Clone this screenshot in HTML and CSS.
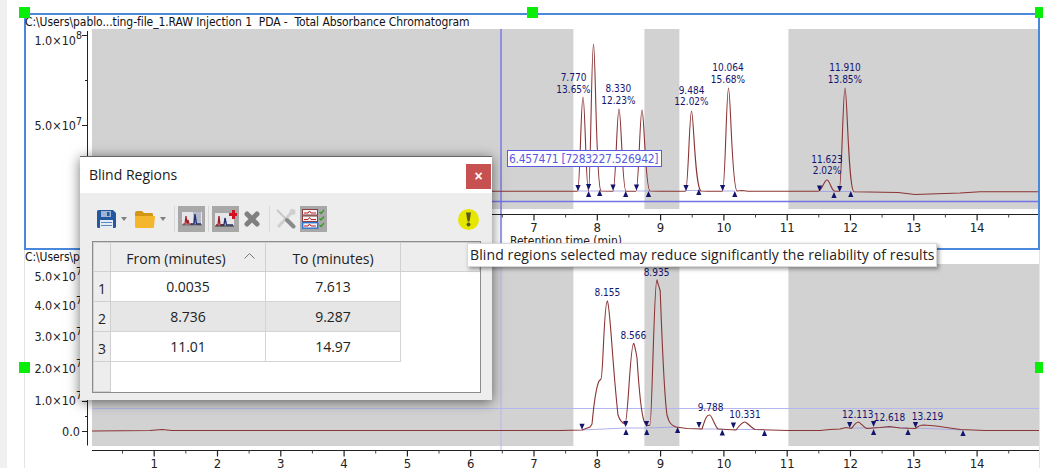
FILE: index.html
```html
<!DOCTYPE html>
<html lang="en">
<head>
<meta charset="utf-8">
<title>Blind Regions</title>
<link rel="stylesheet" href="styles.css">
</head>
<body>
<div class="app">
  <svg class="defs" width="0" height="0" aria-hidden="true">
    <defs>
      <path id="dn" d="M-2.6 -3H2.6L0 3Z"/>
      <path id="up" d="M-2.6 3H2.6L0 -3Z"/>
    </defs>
  </svg>

  <section class="panel panel-top">
    <div class="chart-title">C:\Users\pablo...ting-file_1.RAW Injection 1  PDA -  Total Absorbance Chromatogram</div>
    <svg class="plot plot-top" viewBox="26 29 1012 218" width="1012" height="218">
      <rect class="blind" x="92" y="29" width="947" height="180"/>
      <rect class="clear" x="573.4" y="29" width="71" height="180"/>
      <rect class="clear" x="679.4" y="29" width="109" height="180"/>
      <path class="axis" d="M87.5 31V248M82 35.5H87.5M85 80.5H87.5M82 125.5H87.5M85 170.5H87.5"/>
      <text class="ylab" x="76" y="45" text-anchor="end">1.0×10</text><text class="ysup" x="76" y="39">8</text>
      <text class="ylab" x="76" y="130" text-anchor="end">5.0×10</text><text class="ysup" x="76" y="125">7</text>
      <line class="cursor" x1="501" y1="29" x2="501" y2="248"/>
      <line class="cursor" x1="92" y1="201.5" x2="1039" y2="201.5"/>
      <path class="base" d="M578 191H589M589 191H600M613 191H626M637 191H649M686 190.500H699M723 191H735M820 191.500H834M840 191.500H851"/>
      <path class="signal" d="M92 191.200H577.500C580 191.200 581 97 583 97C585 97 586 191 588.500 191C590.500 191 591.500 44 593.500 44C595.500 44 596 188 601 191L613 191.200C615.700 191.200 616.900 109 619 109C621.100 109 622.300 191 626 191.200H636C638.700 191.200 639.900 110 642 110C644.100 110 645.300 190 650 191L660 191.200H685.500C688.200 191.200 689.400 111 691.500 111C693.600 111 694.800 188 701 191L708 191.200H722.500C725.200 191.200 726.400 88 728.500 88C730.600 88 731.800 189 737 191L742 190.500L748 191.200H818C822 191.200 824 180 827 180C830 180 831 191 835 191.200H839C841.700 191.200 842.900 88 845 88C847.100 88 848.300 190 854 191.800L898 192.500L915 194.500L960 193L980 191.800H1039"/>
      <g class="marks">
        <use href="#dn" x="578" y="188"/><use href="#dn" x="588.600" y="187"/><use href="#dn" x="613" y="187.500"/><use href="#dn" x="636.500" y="187.500"/><use href="#dn" x="686" y="188"/><use href="#dn" x="722.600" y="188"/><use href="#dn" x="819.600" y="188.600"/><use href="#dn" x="839.700" y="189"/>
        <use href="#up" x="588.600" y="194"/><use href="#up" x="599.700" y="193"/><use href="#up" x="625.700" y="194"/><use href="#up" x="648.500" y="194"/><use href="#up" x="698.800" y="192"/><use href="#up" x="734.800" y="194"/><use href="#up" x="834" y="195"/><use href="#up" x="850.800" y="194"/>
      </g>
      <g class="peak" text-anchor="middle">
        <text x="573.500" y="80.500">7.770</text><text x="573.500" y="92.500">13.65%</text>
        <text x="618.400" y="92">8.330</text><text x="618.400" y="103.500">12.23%</text>
        <text x="691.500" y="94">9.484</text><text x="691.500" y="105">12.02%</text>
        <text x="728" y="71">10.064</text><text x="728" y="83">15.68%</text>
        <text x="845" y="71">11.910</text><text x="845" y="83">13.85%</text>
        <text x="827" y="163">11.623</text><text x="827" y="174">2.02%</text>
      </g>
      <path class="axis" d="M92 214.500H1039"/>
      <line class="tick-major" x1="153.600" y1="217.500" x2="1039" y2="217.500"/>
      <line class="tick-minor" x1="122" y1="216" x2="1039" y2="216"/>
      <g class="xlab" text-anchor="middle">
        <text x="534" y="232">7</text><text x="597.300" y="232">8</text><text x="660.600" y="232">9</text><text x="723.900" y="232">10</text><text x="787.200" y="232">11</text><text x="850.500" y="232">12</text><text x="913.800" y="232">13</text><text x="977.100" y="232">14</text>
      </g>
      <text class="xtitle" x="510" y="245">Retention time (min)</text>
      <g class="tag">
        <rect x="507.500" y="150.500" width="154" height="16"/>
        <text x="509" y="163">6.457471 [7283227.526942]</text>
      </g>
    </svg>
  </section>

  <section class="panel panel-bottom">
    <div class="chart-title">C:\Users\pablo...ting-file_1.RAW Injection 1</div>
    <svg class="plot plot-bottom" viewBox="25 264 1015 204" width="1015" height="204">
      <rect class="blind" x="92" y="264" width="947" height="182"/>
      <rect class="clear" x="573.400" y="264" width="71" height="182"/>
      <rect class="clear" x="679.400" y="264" width="109" height="182"/>
      <path class="axis" d="M87.500 266V445.500M82 431.500H87.500M85 416.500H87.500M82 401.500H87.500"/>
      <text class="ylab" x="76" y="281" text-anchor="end">5.0×10</text><text class="ysup" x="76" y="275">7</text>
      <text class="ylab" x="76" y="310" text-anchor="end">4.0×10</text><text class="ysup" x="76" y="304">7</text>
      <text class="ylab" x="76" y="341" text-anchor="end">3.0×10</text><text class="ysup" x="76" y="335">7</text>
      <text class="ylab" x="76" y="373" text-anchor="end">2.0×10</text><text class="ysup" x="76" y="367">7</text>
      <text class="ylab" x="76" y="405" text-anchor="end">1.0×10</text><text class="ysup" x="76" y="399">7</text>
      <text class="ylab" x="80" y="436" text-anchor="end">0.0</text>
      <line class="cursor-faint" x1="501" y1="264" x2="501" y2="450"/>
      <line class="cursor-faint" x1="92" y1="408.500" x2="1039" y2="408.500"/>
      <path class="base" d="M582 430L625 428H646L677 427M699 429H722M733 429.500H764M850 428H873M873 427.500H908M916 428L963 430"/>
      <path class="signal" d="M92 431L150 430.500L162 429.500L172 430.500H560L582 430L590 427L592 424C594 405 595 390 599 381L601 379C603 378 604 302 607.300 301C610 303 612 360 618 415C620 421 622 423 625 424C628 424 630 344 633.700 343.300C635 346 636 352 637 358C639 390 641 412 644 421C646 426 648 426 650 425C652 425 654 281 656.900 280C658 284 659 286 660.200 291C662 340 664 395 667 415C669 423 671 425 676 427L687 428.500L702 429C705 420 706 415 709.500 415C712 415 714 425 718 429L736 430C739 426 742 422 744.800 422C747 422 750 427 755 429.500L788 430.500H820L830 429.500L840 429L846 427.500L851.500 428.500C854 425 856 422 858.400 422C861 423 863 427 867 428.500L880 427.500L889.500 426.500L900 428L915.500 428.500C918 426 920 425 924 425L936 426L960.500 429.500L985 430.500H1039"/>
      <g class="marks">
        <use href="#dn" x="582" y="426.700"/><use href="#dn" x="625.700" y="424"/><use href="#dn" x="646.500" y="424"/><use href="#dn" x="699" y="425"/><use href="#dn" x="733.400" y="425.500"/><use href="#dn" x="849.700" y="425"/><use href="#dn" x="873.600" y="424"/><use href="#dn" x="915.500" y="425"/>
        <use href="#up" x="626" y="432"/><use href="#up" x="646.800" y="432"/><use href="#up" x="677.600" y="430"/><use href="#up" x="722.300" y="432.500"/><use href="#up" x="764.500" y="433"/><use href="#up" x="873.600" y="432"/><use href="#up" x="908" y="432"/><use href="#up" x="963" y="433"/>
      </g>
      <g class="peak" text-anchor="middle">
        <text x="607.300" y="295.500">8.155</text>
        <text x="633.400" y="339">8.566</text>
        <text x="656.500" y="275.500">8.935</text>
        <text x="710.500" y="410.500">9.788</text>
        <text x="745" y="418">10.331</text>
        <text x="857.700" y="418">12.113</text>
        <text x="889.500" y="420.500">12.618</text>
        <text x="927.500" y="419.500">13.219</text>
      </g>
      <path class="axis" d="M92 450.500H1039"/>
      <line class="tick-major" x1="153.600" y1="453.500" x2="1039" y2="453.500"/>
      <line class="tick-minor" x1="122" y1="452" x2="1039" y2="452"/>
      <g class="xlab" text-anchor="middle">
        <text x="154.200" y="468">1</text><text x="217.500" y="468">2</text><text x="280.800" y="468">3</text><text x="344.100" y="468">4</text><text x="407.400" y="468">5</text><text x="470.700" y="468">6</text><text x="534" y="468">7</text><text x="597.300" y="468">8</text><text x="660.600" y="468">9</text><text x="723.900" y="468">10</text><text x="787.200" y="468">11</text><text x="850.500" y="468">12</text><text x="913.800" y="468">13</text><text x="977.100" y="468">14</text>
      </g>
    </svg>
  </section>

  <span class="handle h-tl"></span>
  <span class="handle h-tm"></span>
  <span class="handle h-tr"></span>
  <span class="handle h-ml"></span>
  <span class="handle h-mr"></span>

  <div class="dialog">
    <header class="dialog-head">
      <span class="dialog-title">Blind Regions</span>
      <button class="close" type="button">×</button>
    </header>
    <div class="dialog-body">
      <div class="toolbar">
        <svg class="ico ico-save" viewBox="0 0 19 18" width="19" height="18">
          <path fill="#24589f" d="M0 1.500Q0 0 1.500 0H16L19 3V16.500Q19 18 17.500 18H1.500Q0 18 0 16.500Z"/>
          <rect fill="#e4ecf6" x="3" y="10" width="13" height="8"/>
          <path stroke="#5f86bd" d="M4 12.500H15M4 15.500H15"/>
          <rect fill="#9db4d2" x="4" y="1" width="10" height="6"/>
          <rect fill="#24589f" x="10" y="2" width="2.500" height="4"/>
        </svg>
        <span class="caret"></span>
        <svg class="ico ico-open" viewBox="0 0 20 17" width="20" height="17">
          <path fill="#d39516" d="M0 2Q0 0 2 0H7L9 2H17Q18 2 18 4V6H0Z"/>
          <path fill="#f3b62c" d="M0 5H20L19 15.500Q19 17 17.500 17H1.500Q0 17 0 15.500Z"/>
        </svg>
        <span class="caret"></span>
        <span class="sep"></span>
        <span class="tool on">
          <svg viewBox="0 0 20 16" width="20" height="16">
            <rect fill="#e6e6ea" x="0" y="1" width="20" height="14"/>
            <rect fill="#b6b8cc" x="11" y="1" width="8" height="13"/>
            <path fill="none" stroke="#a01c24" stroke-width="1.200" d="M1 13H3L4 5L5 13L6 9L7 13H10"/>
            <path fill="none" stroke="#26336e" stroke-width="1.400" d="M9 13H12L13 3L14.500 13H19"/>
            <path stroke="#333" d="M0 14H20"/>
          </svg>
        </span>
        <span class="sep"></span>
        <span class="tool on">
          <svg viewBox="0 0 22 18" width="22" height="18">
            <rect fill="#e6e6ea" x="0" y="3" width="19" height="13"/>
            <path fill="none" stroke="#a01c24" stroke-width="1.300" d="M1 15H3L4 6L5 15H9"/>
            <path fill="none" stroke="#26336e" stroke-width="1.400" d="M6 15H9L10 8L11.500 15H18"/>
            <path stroke="#333" d="M0 16H19"/>
            <path fill="#d3101f" d="M14 3H17V0H20V3H22V6H20V9H17V6H14Z"/>
          </svg>
        </span>
        <svg class="ico ico-del" viewBox="0 0 16 16" width="16" height="16">
          <path fill="none" stroke="#808080" stroke-width="5" stroke-linecap="round" d="M3 3L13 13M13 3L3 13"/>
        </svg>
        <span class="sep sep-wide"></span>
        <svg class="ico ico-tools" viewBox="0 0 20 20" width="20" height="20">
          <path fill="none" stroke="#cfcfcf" stroke-width="3" d="M17 2L2 18"/>
          <circle fill="#cfcfcf" cx="16.500" cy="3" r="3"/>
          <path fill="none" stroke="#c8c8c8" stroke-width="2" d="M1 1L11 11"/>
          <path fill="none" stroke="#8a8a8a" stroke-width="4" stroke-linecap="round" d="M11 11L17.500 17.500"/>
        </svg>
        <span class="tool on tool-last">
          <svg viewBox="0 0 23 20" width="23" height="20">
            <rect fill="#f4f4f4" stroke="#8a4040" x="0.500" y="0.500" width="15" height="5.500"/>
            <rect fill="#f4f4f4" stroke="#8a4040" x="0.500" y="7" width="15" height="5.500"/>
            <rect fill="#f4f4f4" stroke="#2f74d0" stroke-width="1.400" x="0.700" y="13.700" width="15" height="5.500"/>
            <path fill="none" stroke="#c02020" d="M2 4H6L7.500 2L9 4H14M2 10.500H6L7.500 8.500L9 10.500H14M2 17H6L7.500 15L9 17H14"/>
            <path fill="none" stroke="#3c9a2a" stroke-width="1.400" d="M17.500 3L19 4.500L22 1M17.500 9.500L19 11L22 7.500M17.500 16L19 17.500L22 14"/>
          </svg>
        </span>
        <svg class="warn" viewBox="0 0 21 21" width="21" height="21">
          <circle fill="#e6e600" cx="10.500" cy="10.500" r="10.500"/>
          <path fill="#5a5a20" d="M8 3.500H13L11.500 12.500H9.500Z"/>
          <circle fill="#5a5a20" cx="10.500" cy="15.500" r="2"/>
        </svg>
      </div>
      <div class="table-wrap">
        <table class="regions">
          <colgroup><col class="c0"><col class="c1"><col class="c2"><col></colgroup>
          <thead>
            <tr>
              <th></th>
              <th class="from">From (minutes)
                <svg class="sort" viewBox="0 0 11 6" width="11" height="6"><path fill="none" stroke="#777" d="M0.500 5.500L5.500 0.500L10.500 5.500"/></svg>
              </th>
              <th>To (minutes)</th>
              <th class="filler"></th>
            </tr>
          </thead>
          <tbody>
            <tr><th>1</th><td>0.0035</td><td>7.613</td><td class="empty"></td></tr>
            <tr class="alt"><th>2</th><td>8.736</td><td>9.287</td><td class="empty"></td></tr>
            <tr><th>3</th><td>11.01</td><td>14.97</td><td class="empty"></td></tr>
            <tr class="rest"><th></th><td class="empty" colspan="3"></td></tr>
          </tbody>
        </table>
      </div>
    </div>
  </div>

  <div class="tooltip">Blind regions selected may reduce significantly the reliability of results</div>
</div>
</body>
</html>
```
FILE: styles.css
```css
* { box-sizing: border-box; }
html, body { margin: 0; padding: 0; background: #fff; }
.app {
  position: relative;
  width: 1043px;
  height: 468px;
  overflow: hidden;
  padding-top: 13px;
  display: flex;
  flex-direction: column;
  background: #fff;
  border-left: 7px solid #f0f0f0;
  font-family: "Open Sans", "Liberation Sans", sans-serif;
}
.defs { position: absolute; }
.panel { margin-left: 17px; width: 1016px; background: #fff; }
.panel-top { height: 237px; border: 2px solid #4a88dc; flex: none; }
.panel-bottom { height: 218px; flex: none; border-left: 1px solid #e4e4e4; border-right: 1px solid #e4e4e4; }
.chart-title {
  height: 14px;
  margin-left: -1px;
  white-space: pre;
  letter-spacing: -.07px;
  font: 12px/14px "DejaVu Sans Condensed", "Liberation Sans", sans-serif;
  color: #111;
}
.panel-bottom .chart-title { margin-left: 0; }
.plot { display: block; overflow: hidden; }
.blind { fill: #d2d2d2; }
.clear { fill: #fff; }
.axis { fill: none; stroke: #222; stroke-width: 1; }
.signal { fill: none; stroke: #8a3434; stroke-width: 1.1; }
.base { fill: none; stroke: #9c9ce4; stroke-width: .8; }
.cursor { stroke: #7474e6; stroke-width: 1.4; }
.cursor-faint { stroke: #b6b6ee; stroke-width: 1; }
.marks { fill: #14146e; }
.peak text { font: 10px "DejaVu Sans Condensed", sans-serif; fill: #14146e; }
.ylab, .xlab text, .xtitle { font: 12.500px "DejaVu Sans Condensed", sans-serif; fill: #222; }
.xtitle { font-size: 12px; }
.xlab text { font-size: 13px; }
.ysup { font: 10.500px "DejaVu Sans Condensed", sans-serif; fill: #222; }
.tick-major { stroke: #222; stroke-width: 6; stroke-dasharray: 1.2 62.1; }
.tick-minor { stroke: #444; stroke-width: 3; stroke-dasharray: 1 62.3; }
.tag rect { fill: #fff; stroke: #5a5ae0; stroke-width: 1; }
.tag text { font: 12px "DejaVu Sans Condensed", sans-serif; letter-spacing: -.27px; fill: #5a5ae0; }

.handle { position: absolute; width: 11px; height: 11px; background: #08ee08; }
.h-tl { left: 12px; top: 7px; }
.h-tm { left: 520px; top: 7px; }
.h-tr { left: 1028px; top: 7px; }
.h-ml { left: 12px; top: 362px; }
.h-mr { left: 1028px; top: 362px; }

.dialog {
  position: absolute;
  left: 73px;
  top: 156px;
  width: 412px;
  height: 244px;
  display: flex;
  flex-direction: column;
  background: #ededed;
  border-top: 1px solid #666;
  box-shadow: 0 2px 12px rgba(0, 0, 0, .55);
}
.dialog-head {
  height: 36px;
  flex: none;
  display: flex;
  align-items: flex-start;
  justify-content: space-between;
  background: #fff;
  padding: 7px 1px 0 9px;
}
.dialog-title { font-size: 14px; line-height: 21px; color: #1a1a1a; }
.close {
  width: 25px;
  height: 25px;
  padding: 0;
  border: 0;
  background: #c75050;
  color: #fff;
  font: bold 14px/23px "Liberation Sans", sans-serif;
}
.dialog-body { flex: 1; padding: 13px 12px 12px; display: flex; flex-direction: column; }
.toolbar { height: 26px; flex: none; margin-bottom: 9px; display: flex; align-items: center; padding-left: 5px; }
.ico { flex: none; display: block; }
.caret { width: 6px; height: 4px; flex: none; margin: 0 5px 0 5px; border-style: solid; border-width: 4px 3px 0; border-color: #808080 transparent transparent; }
.ico-save + .caret { margin: 0 8px 0 5px; }
.sep { width: 1px; height: 26px; background: #d8d8d8; margin: 0 3px; flex: none; }
.sep-wide { margin: 0 6px 0 9px; }
.tool { width: 27px; height: 26px; flex: none; display: flex; align-items: center; justify-content: center; }
.tool.on { background: #a8a8a8; }
.ico-del { margin-left: 5px; }
.tool-last { margin-left: 4px; }
.warn { margin-left: auto; margin-right: 1px; flex: none; display: block; }
.table-wrap { flex: 1; border: 1px solid #8c8c8c; background: #fff; width: 389px; }
.regions { width: 100%; height: 100%; border-collapse: collapse; table-layout: fixed; font-size: 14px; color: #222; }
.c0 { width: 17px; }
.c1 { width: 155px; }
.c2 { width: 135px; }
.regions th { font-weight: 400; background: #ededed; border: 1px solid #d0d0d0; padding: 0; }
.regions td { text-align: center; border: 1px solid #d4d4d4; padding: 0; height: 30px; }
.regions thead th { height: 29px; padding-top: 2px; }
.regions thead .from { padding-right: 24px; position: relative; }
.regions tbody th { padding-top: 3px; }
.regions .sort { position: absolute; right: 10px; top: 10px; }
.regions .alt td { background: #e6e6e6; }
.regions .alt .empty, .regions .empty { background: #fff; border: 0; }
.regions .rest { height: auto; }
.tooltip {
  position: absolute;
  left: 460px;
  top: 243px;
  width: 470px;
  height: 24px;
  padding: 0 2px;
  background: #fff;
  border: 1px solid #d8d8d8;
  box-shadow: 2px 2px 4px rgba(0, 0, 0, .4);
  color: #222;
  white-space: nowrap;
  font-size: 14px;
  letter-spacing: .11px;
  line-height: 22px;
}
```
